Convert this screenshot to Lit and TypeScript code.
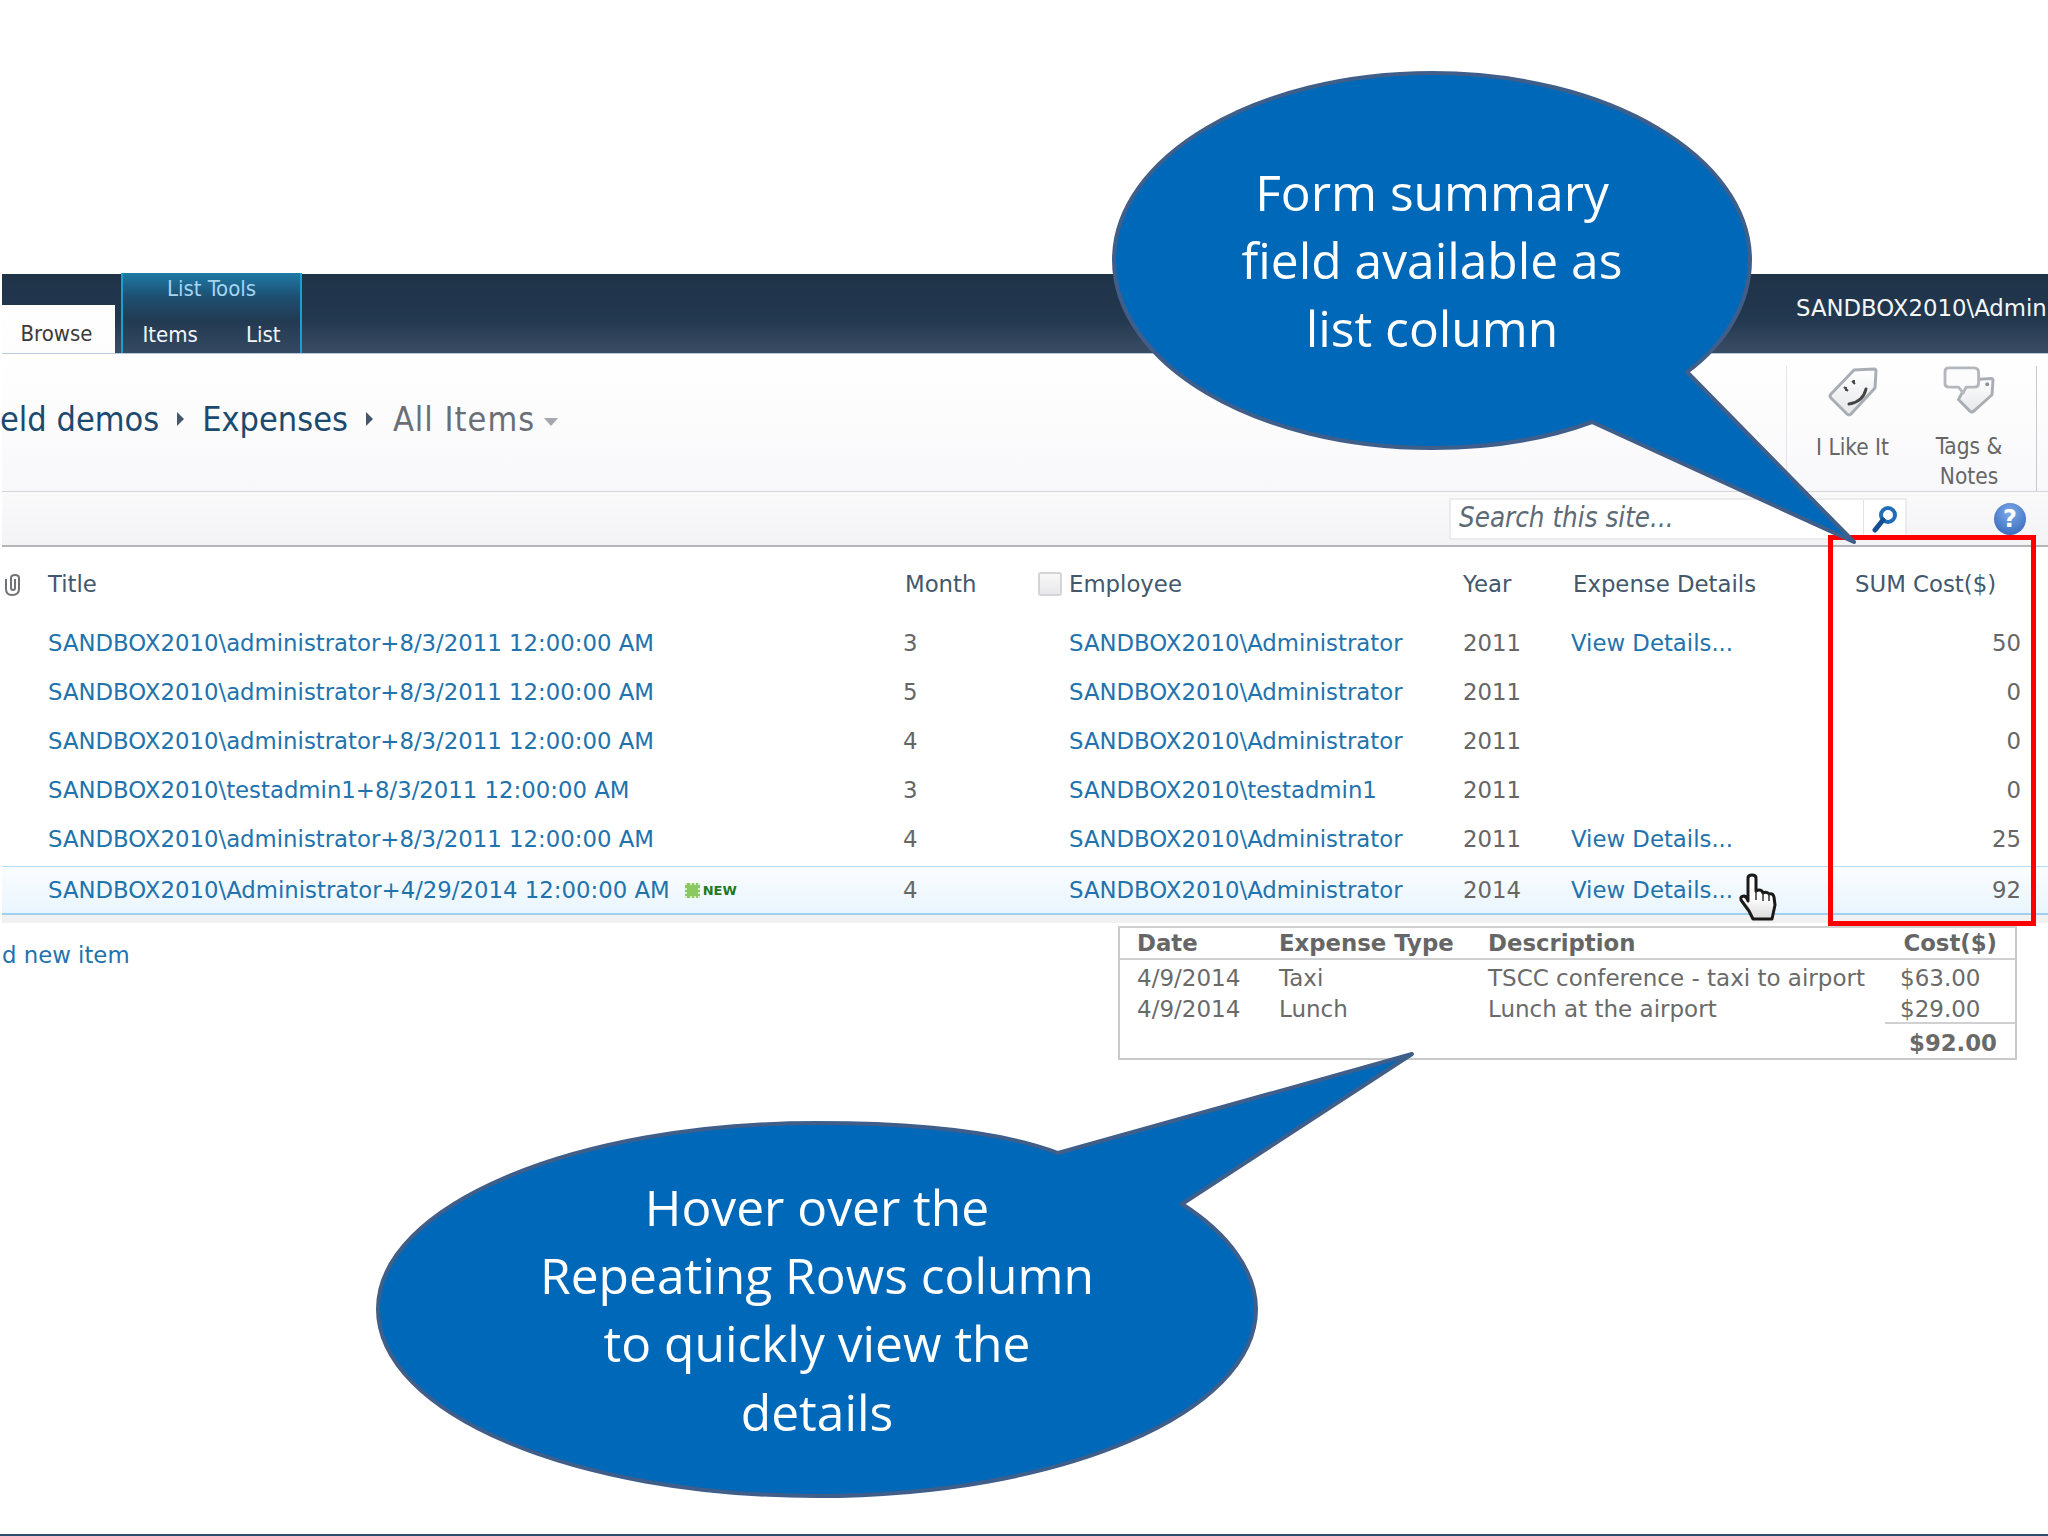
import { LitElement, html, css, svg } from "lit";
import { customElement } from "lit/decorators.js";

const rows = [
  { t: "SANDBOX2010\\administrator+8/3/2011 12:00:00 AM", m: "3", e: "SANDBOX2010\\Administrator", y: "2011", d: true, s: "50" },
  { t: "SANDBOX2010\\administrator+8/3/2011 12:00:00 AM", m: "5", e: "SANDBOX2010\\Administrator", y: "2011", d: false, s: "0" },
  { t: "SANDBOX2010\\administrator+8/3/2011 12:00:00 AM", m: "4", e: "SANDBOX2010\\Administrator", y: "2011", d: false, s: "0" },
  { t: "SANDBOX2010\\testadmin1+8/3/2011 12:00:00 AM", m: "3", e: "SANDBOX2010\\testadmin1", y: "2011", d: false, s: "0" },
  { t: "SANDBOX2010\\administrator+8/3/2011 12:00:00 AM", m: "4", e: "SANDBOX2010\\Administrator", y: "2011", d: true, s: "25" },
  { t: "SANDBOX2010\\Administrator+4/29/2014 12:00:00 AM", m: "4", e: "SANDBOX2010\\Administrator", y: "2014", d: true, s: "92", hot: true },
];

@customElement("app-root")
export class AppRoot extends LitElement {
  static styles = css`
    :host {
      display: block;
      position: relative;
      width: 2048px;
      height: 1536px;
      overflow: hidden;
      background: #fff;
      font-family: "DejaVu Sans", sans-serif;
      font-size: 22.8px;
      color: #666;
      box-sizing: border-box;
      padding: 274px 0 0 2px;
    }
    * { box-sizing: border-box; }
    .bar {
      height: 80px;
      display: flex;
      align-items: flex-end;
      background: linear-gradient(#1f3348, #22384f 55%, #3a4c63);
      color: #fff;
      border-bottom: 1px solid #b9c9dc;
      position: relative;
      font-family: "DejaVu Sans Condensed", "DejaVu Sans", sans-serif;
      font-size: 22px;
    }
    .browse {
      width: 113px;
      height: 48px;
      background: linear-gradient(#fff, #fdfdfd);
      color: #3b3b3b;
      display: flex;
      align-items: center;
      justify-content: center;
      padding: 8px 4px 0 0;
    }
    .tools {
      margin-left: 6px;
      width: 181px;
      height: 80px;
      border-left: 2px solid #17a0d0;
      border-right: 2px solid #17a0d0;
      background: linear-gradient(#1e7aa6, #1d4f72 30%, #223a52 60%, #354a62);
      display: flex;
      flex-direction: column;
      align-items: center;
    }
    .tools-title { color: #a5d5ef; height: 30px; line-height: 30px; margin-top: 1px; }
    .tools-tabs { display: flex; gap: 48px; margin-top: 16px; color: #f4f6f8; line-height: 30px; }
    .user {
      position: absolute;
      left: 1794px;
      top: 21px;
      white-space: nowrap;
      font-family: "DejaVu Sans", sans-serif;
      font-size: 22.8px;
      color: #f4f6f8;
    }
    .ribbon {
      height: 138px;
      display: flex;
      align-items: stretch;
      justify-content: space-between;
      background: linear-gradient(#fff, #f8f8fa);
      border-bottom: 1px solid #d5d5d8;
      padding-right: 11px;
      font-family: "DejaVu Sans Condensed", "DejaVu Sans", sans-serif;
    }
    .crumbs {
      display: flex;
      align-items: center;
      gap: 18px;
      height: 130px;
      font-size: 34px;
      color: #1c4a6e;
    }
    .crumb-first { margin-left: -2px; }
    .crumb-last { color: #6b6f75; margin-left: 2px; letter-spacing: 1px; }
    .tri-r { width: 0; height: 0; border-left: 7px solid #44576b; border-top: 7px solid transparent; border-bottom: 7px solid transparent; }
    .tri-d { width: 0; height: 0; border-top: 8px solid #a5a8ad; border-left: 7px solid transparent; border-right: 7px solid transparent; margin: 6px 0 0 -9px; }
    .social {
      width: 251px;
      margin-top: 12px;
      border-left: 1px solid #e4e4e6;
      border-right: 1px solid #c9c9cc;
      display: flex;
      font-size: 22.5px;
      line-height: 30px;
      color: #666;
      text-align: center;
    }
    .soc { display: flex; flex-direction: column; align-items: center; }
    .soc svg { display: block; height: 52px; }
    .soc1 { width: 131px; }
    .soc1 svg { margin-bottom: 14px; }
    .soc2 { width: 102px; }
    .soc2 svg { margin-bottom: 17px; }
    .toolbar {
      height: 55px;
      display: flex;
      justify-content: flex-end;
      align-items: center;
      background: linear-gradient(#fafafb, #f3f3f5);
      border-bottom: 2px solid #b5b5b8;
      padding-right: 22px;
    }
    .search {
      width: 458px;
      height: 42px;
      display: flex;
      border: 2px solid #ececee;
      background: #fff;
      margin-right: 87px;
      font-family: "DejaVu Sans Condensed", "DejaVu Sans", sans-serif;
    }
    .search-text { flex: 1; font-style: italic; color: #5d6a76; font-size: 27.5px; line-height: 34px; padding-left: 8px; }
    .search-btn { width: 42px; border-left: 1px solid #e3e3e5; display: flex; align-items: center; justify-content: center; }
    .help {
      width: 32px;
      height: 32px;
      border-radius: 50%;
      background: radial-gradient(circle at 50% 30%, #7fa9e6, #2a62b8);
      color: #fff;
      font-weight: bold;
      font-size: 24px;
      display: flex;
      align-items: center;
      justify-content: center;
    }
    .grid {
      display: grid;
      grid-template-columns: 855px 166px 394px 108px 284px 166px;
      padding-left: 46px;
      align-items: center;
      white-space: nowrap;
    }
    .head { height: 71px; padding-top: 3px; color: #43586c; position: relative; }
    .clip { position: absolute; left: 2px; top: 26px; }
    .h-month { margin-left: 2px; }
    .h-emp { display: flex; align-items: center; margin-left: -31px; gap: 7px; }
    .check { width: 24px; height: 24px; border: 2px solid #d5d5d8; border-radius: 3px; background: linear-gradient(#f8f8f8, #e8e8ea); }
    .h-det { margin-left: 2px; }
    .row { height: 49.2px; }
    .row.hot {
      height: 49px;
      margin-top: 2px;
      padding-top: 1px;
      border-top: 1px solid #b7dcf4;
      border-bottom: 2px solid #9fd0f0;
      background: linear-gradient(#fafdff, #e9f5fd);
    }
    .rows { display: flex; flex-direction: column; }
    .link { color: #2273ad; }
    .right { text-align: right; }
    .title-cell { display: flex; align-items: center; gap: 15px; }
    .new { display: flex; align-items: center; gap: 3px; font-size: 13px; font-weight: bold; color: #1f7a1f; }
    .new-ic { width: 15px; height: 15px; background: #8cc860; border: 2px dotted #d8efc6; }
    .under { height: 8px; background: #f1f1f1; }
    .below { display: flex; align-items: flex-start; }
    .add { width: 1116px; padding-top: 19px; color: #2273ad; }
    .panel {
      width: 899px;
      height: 134px;
      margin-top: 3px;
      border: 2px solid #c9c9cc;
      border-top-color: #d0d0d3;
      display: grid;
      grid-template-columns: 142px 209px 412px 1fr;
      grid-template-rows: 32px 31px 32px 35px;
      padding-left: 17px;
      align-items: center;
      white-space: nowrap;
      position: relative;
      color: #6a6a6a;
      font-size: 23px;
    }
    .panel > span { padding-top: 5px; }
    .panel > .phead { font-weight: bold; color: #666; border-bottom: 2px solid #d0d0d3; height: 32px; line-height: 30px; padding-top: 0; font-size: 22.8px; }
    .panel > .pfirst { margin-left: -17px; padding-left: 17px; }
    .panel > .pright { text-align: right; padding-right: 18px; }
    .total { grid-column: 1 / 5; text-align: right; font-weight: bold; padding-right: 18px; font-size: 22.8px; }
    .rule { position: absolute; right: 0; top: 94px; width: 130px; height: 2px; background: #d0d0d3; }
    .cursor { position: absolute; left: 1738px; top: 873px; }
    .frame { position: absolute; left: 1828px; top: 535px; width: 208px; height: 391px; border: 5px solid #f00; pointer-events: none; }
    .callout { position: absolute; color: #fff; font-family: "Open Sans", sans-serif; font-size: 49.7px; line-height: 68.2px; text-align: center; }
    .callout svg { position: absolute; inset: 0; overflow: visible; }
    .callout div { position: absolute; left: 0; right: 0; }
    .call1 { left: 1114px; top: 73px; width: 636px; height: 375px; }
    .call1 div { top: 85px; }
    .call2 { left: 378px; top: 1123px; width: 878px; height: 373px; }
    .call2 div { top: 50px; }
    .foot { position: absolute; left: 0; right: 0; bottom: 0; height: 2px; background: #2c4d70; }
  `;

  render() {
    return html`
      <div class="bar">
        <div class="browse">Browse</div>
        <div class="tools">
          <div class="tools-title">List Tools</div>
          <div class="tools-tabs"><span>Items</span><span>List</span></div>
        </div>
        <div class="user">SANDBOX2010\\Admin</div>
      </div>
      <div class="ribbon">
        <div class="crumbs">
          <span class="crumb-first">eld demos</span><i class="tri-r"></i>
          <span>Expenses</span><i class="tri-r"></i>
          <span class="crumb-last">All Items</span><i class="tri-d"></i>
        </div>
        <div class="social">
          <div class="soc soc1">
            <svg width="52" height="52" viewBox="0 0 52 52">
              <defs>
                <linearGradient id="tg" x1="0" y1="0" x2="0" y2="1">
                  <stop offset="0" stop-color="#ffffff" />
                  <stop offset="1" stop-color="#e6e7ea" />
                </linearGradient>
              </defs>
              <path d="M27 4 L47 3 Q49 3 49 5 L48 22 L24 48 Q22 50 20 48 L4 32 Q2 30 4 28 Z" fill="url(#tg)" stroke="#a9aeb5" stroke-width="3" stroke-linejoin="round"/>
              <path d="M17 21 l4 4 M19 25 l-0 -4 M25 15 l3 3 M27 18 l0 -4" stroke="#444" stroke-width="1.8"/>
              <path d="M22 38 Q36 36 39 23" fill="none" stroke="#444" stroke-width="3" stroke-linecap="round"/>
            </svg>
            I Like It
          </div>
          <div class="soc soc2">
            <svg width="54" height="50" viewBox="0 0 54 50">
              <path d="M34 14 L50 13 Q52 13 52 15 L51 30 L32 47 Q30 49 28 47 L16 35 L22 24 Z" fill="url(#tg)" stroke="#a9aeb5" stroke-width="3" stroke-linejoin="round"/>
              <path d="M6 2 H32 Q37 2 37 7 V18 Q37 22 33 22 H24 L21 28 L16 22 H6 Q2 22 2 18 V6 Q2 2 6 2 Z" fill="#fcfcfc" stroke="#b4b8be" stroke-width="3" stroke-linejoin="round"/>
              <circle cx="46" cy="19" r="2" fill="#8b9097"/>
            </svg>
            <span>Tags &amp;<br />Notes</span>
          </div>
        </div>
      </div>
      <div class="toolbar">
        <div class="search">
          <div class="search-text">Search this site...</div>
          <div class="search-btn">
            <svg width="26" height="28" viewBox="0 0 26 28">
              <circle cx="16" cy="10" r="7" fill="none" stroke="#1f6fb8" stroke-width="4"/>
              <path d="M11 15 L3 25" stroke="#14508f" stroke-width="5" stroke-linecap="round"/>
            </svg>
          </div>
        </div>
        <div class="help">?</div>
      </div>
      <div class="grid head">
        <svg class="clip" width="17" height="24" viewBox="0 0 17 24">
          <path d="M2 6 V16 Q2 22 8 22 Q15 22 15 16 V5 Q15 2 11 2 Q7 2 7 5 V15 Q7 17 9 17 Q11 17 11 15 V6" fill="none" stroke="#6f7478" stroke-width="2"/>
        </svg>
        <span>Title</span><span class="h-month">Month</span>
        <span class="h-emp"><i class="check"></i>Employee</span>
        <span>Year</span><span class="h-det">Expense Details</span><span>SUM Cost($)</span>
      </div>
      <div class="rows">
        ${rows.map(
          (r) => html`
            <div class="grid row ${r.hot ? "hot" : ""}">
              <span class="link title-cell">${r.t}${r.hot
                ? html`<span class="new"><i class="new-ic"></i>NEW</span>`
                : ""}</span>
              <span>${r.m}</span>
              <span class="link">${r.e}</span>
              <span>${r.y}</span>
              <span class="link">${r.d ? "View Details..." : ""}</span>
              <span class="right">${r.s}</span>
            </div>
          `
        )}
      </div>
      <div class="under"></div>
      <div class="below">
        <div class="add">d new item</div>
        <div class="panel">
          <span class="phead pfirst">Date</span><span class="phead">Expense Type</span><span class="phead">Description</span><span class="phead pright">Cost($)</span>
          <span>4/9/2014</span><span>Taxi</span><span>TSCC conference - taxi to airport</span><span>$63.00</span>
          <span>4/9/2014</span><span>Lunch</span><span>Lunch at the airport</span><span>$29.00</span>
          <span class="total">$92.00</span>
          <i class="rule"></i>
        </div>
      </div>
      <svg class="cursor" width="40" height="50" viewBox="0 0 40 50">
        <defs>
          <linearGradient id="hg" x1="0" y1="0" x2="0" y2="1">
            <stop offset="0.5" stop-color="#ffffff" />
            <stop offset="1" stop-color="#dcdcdc" />
          </linearGradient>
        </defs>
        <path d="M10 5 Q10 2 14 2 Q18 2 18 5 V18 Q21 16 24 18 L25 20 Q29 18 31 21 Q35 20 36 24 L37 32 L34 46 H15 L11 38 L3 27 Q2 23 6 23 Q9 24 10 28 Z" fill="url(#hg)" stroke="#1a1a1a" stroke-width="3" stroke-linejoin="round"/>
        <path d="M18 18 V27 M25 20 V28 M31 21 V28" stroke="#333" stroke-width="1.5"/>
      </svg>
      <div class="frame"></div>
      <div class="callout call1">
        <svg width="636" height="375" viewBox="0 0 636 375">
          ${svg`<path d="M318 0 C494 0 636 84 636 187 C636 231 611 271 573 299 L740 469 L478 349 C429 367 375 375 318 375 C142 375 0 291 0 187 C0 84 142 0 318 0 Z" fill="#0068b8" stroke="#3f5f8a" stroke-width="4" stroke-linejoin="round"/>`}
        </svg>
        <div>Form summary<br />field available as<br />list column</div>
      </div>
      <div class="callout call2">
        <svg width="878" height="373" viewBox="0 0 878 373">
          ${svg`<path d="M439 0 C568 0 638 14 680 30 L1034 -69 L804 81 C851 111 878 149 878 186 C878 290 683 373 439 373 C195 373 0 290 0 186 C0 83 195 0 439 0 Z" fill="#0068b8" stroke="#3f5f8a" stroke-width="4" stroke-linejoin="round"/>`}
        </svg>
        <div>Hover over the<br />Repeating Rows column<br />to quickly view the<br />details</div>
      </div>
      <div class="foot"></div>
    `;
  }
}
